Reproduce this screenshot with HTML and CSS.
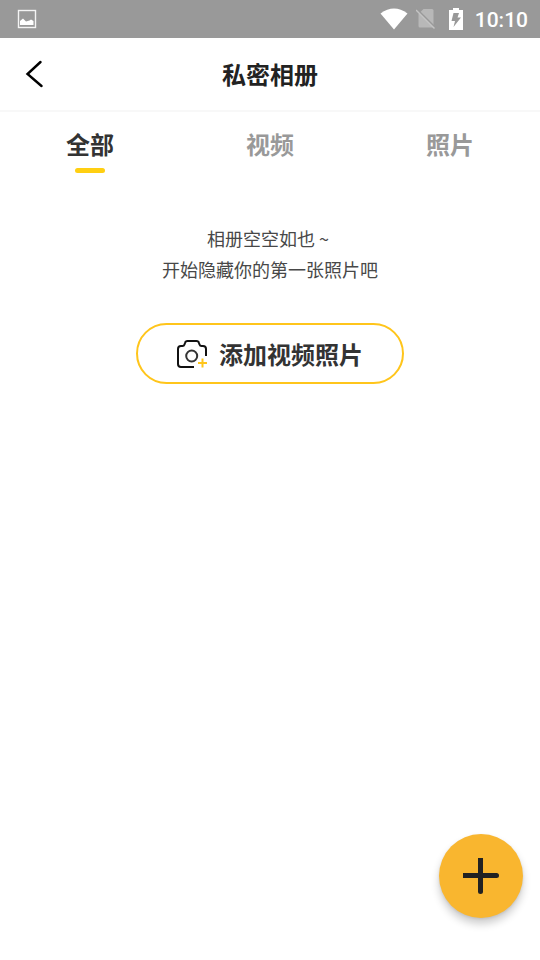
FILE: index.html
```html
<!DOCTYPE html>
<html lang="zh-CN">
<head>
<meta charset="utf-8">
<meta name="viewport" content="width=device-width, initial-scale=1">
<title>私密相册</title>
<link rel="stylesheet" href="styles.css">
</head>
<body>
<div class="status">
  <svg width="20" height="20" viewBox="0 0 20 20" aria-hidden="true"><rect x="1.500" y="1.500" width="17" height="17" fill="none" stroke="#f4f4f4" stroke-width="1.400"/><path d="M3 16v-4L6 9.500l3 3 3.500-1 1.500-1 2.500 1.500V16z" fill="#fff"/></svg>
  <div class="status-right">
    <svg class="wifi" width="28" height="22" viewBox="0 0 28 22" aria-hidden="true"><path d="M.5 5.500Q14-4.500 27.500 5.500L14 21.500z" fill="#fff"/></svg>
    <svg class="sim" width="20" height="22" viewBox="0 0 20 22" aria-hidden="true"><path d="M7.500 1H16q1.500 0 1.500 1.500v17H4q-1.500 0-1.500-1.500V6z" fill="#b8b8b8"/><path d="M1 1.500 20 20.500" stroke="#999" stroke-width="2"/><path d="M0 2 18.500 20.500" stroke="#c4c4c4" stroke-width="1.500"/></svg>
    <svg class="battery" width="14" height="22" viewBox="0 0 14 22" aria-hidden="true"><path d="M4 0h6v2h4v20H0V2h4z" fill="#fff"/><path d="M4.500 5H10L8.500 9.500H12L4.500 19 6 13H2.500z" fill="#999"/></svg>
    <time>10:10</time>
  </div>
</div>
<header class="header">
  <button class="back" type="button" aria-label="返回"><svg width="18" height="28" viewBox="0 0 18 28" aria-hidden="true"><path d="M15.500 2 2.500 14 16.500 26" fill="none" stroke="#000" stroke-width="2.400" stroke-linecap="round"/></svg></button>
  <h1>私密相册</h1>
</header>
<nav class="tabs">
  <a class="tab active" href="#all" aria-current="page">全部</a>
  <a class="tab" href="#videos">视频</a>
  <a class="tab" href="#photos">照片</a>
</nav>
<main class="empty">
  <p>相册空空如也 ~&nbsp;<br>开始隐藏你的第一张照片吧</p>
  <button class="add" type="button">
    <svg width="32" height="30" viewBox="0 0 32 30" fill="none" aria-hidden="true"><path d="M18 28H5Q2 28 2 25V10Q2 7 5 7H6.500Q8 7 8.500 5.500L9 4Q9.500 2 11.500 2H20.500Q22.500 2 23 4L23.500 5.500Q24 7 25.500 7H27Q30 7 30 10V17" stroke="#111" stroke-width="2"/><circle cx="15.700" cy="17" r="5.500" stroke="#333" stroke-width="2"/><path d="M22 24h9M26.500 19.500v9" stroke="#ffc51b" stroke-width="2"/></svg>
    <span>添加视频照片</span>
  </button>
</main>
<button class="fab" type="button" aria-label="添加"><svg width="36" height="36" viewBox="0 0 36 36" aria-hidden="true"><path d="M0 15h33.500q2.500 0 2.500 2.500T33.500 20H0z" fill="#222"/><path d="M15 0h5v33.500q0 2.500-2.500 2.500T15 33.500z" fill="#222"/></svg></button>
</body>
</html>
```
FILE: styles.css
```css
* { box-sizing: border-box; }
body {
  margin: 0;
  min-height: 100vh;
  background: #fff;
  color: #333;
  font-family: "Noto Sans CJK SC", sans-serif;
}
svg { display: block; flex: none; }
button { border: 0; padding: 0; background: none; color: inherit; font: inherit; cursor: pointer; }
.status {
  display: flex;
  align-items: center;
  justify-content: space-between;
  height: 38px;
  padding: 0 12px 0 17px;
  background: #999;
  color: #fff;
}
.status-right { display: flex; align-items: center; }
.sim { margin-left: 8px; }
.battery { margin: 0 12px 0 13px; }
.status time { font: 500 21px/38px Roboto, sans-serif; padding-top: 2px; }
.header {
  display: grid;
  grid-template-columns: 68px 1fr 68px;
  align-items: center;
  height: 74px;
  border-bottom: 2px solid #f8f8f8;
}
.back { display: flex; justify-content: center; padding: 8px 0; }
.header h1 { margin: 0; text-align: center; font-size: 24px; line-height: 36px; font-weight: 700; color: #222; }
.tabs { display: grid; grid-template-columns: repeat(3, 1fr); }
.tab {
  display: flex;
  flex-direction: column;
  align-items: center;
  gap: 6px;
  padding-top: 14px;
  color: #999;
  text-decoration: none;
  font-size: 24px;
  line-height: 36px;
  font-weight: 700;
}
.tab.active { color: #333; }
.tab::after { content: ""; width: 30px; height: 5px; border-radius: 3px; }
.tab.active::after { background: #ffcf12; }
.empty { display: flex; flex-direction: column; align-items: center; padding-top: 50px; }
.empty p { margin: 0; text-align: center; font-size: 18px; line-height: 31px; color: #484848; }
.add {
  display: flex;
  align-items: center;
  gap: 11px;
  height: 61px;
  margin-top: 38px;
  padding: 0 39px 0 38px;
  border: 2px solid #ffc51b;
  border-radius: 31px;
  font-size: 24px;
  line-height: 36px;
  font-weight: 700;
}
.fab {
  position: fixed;
  right: 17px;
  bottom: 42px;
  display: flex;
  align-items: center;
  justify-content: center;
  width: 84px;
  height: 84px;
  border-radius: 50%;
  background: #f9b62f;
  box-shadow: 0 6px 8px rgba(0, 0, 0, .2), 0 1px 3px rgba(0, 0, 0, .1);
}
```
